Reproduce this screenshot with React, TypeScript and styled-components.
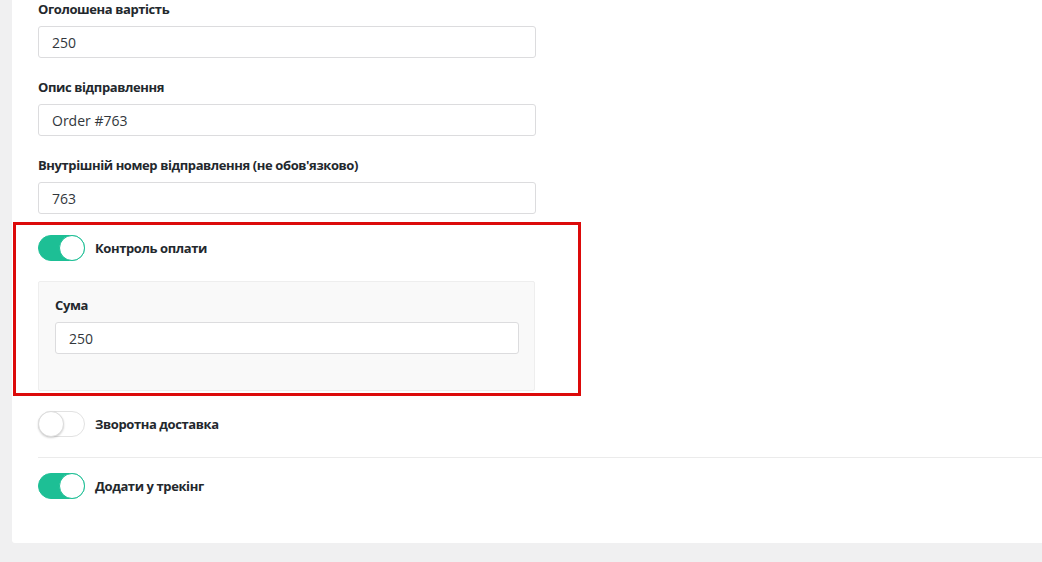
import styled, { createGlobalStyle } from "styled-components";

const GlobalStyle = createGlobalStyle`
  html, body {
    margin: 0;
    padding: 0;
    background: #f0f0f1;
    font-family: "Open Sans", "Noto Sans", sans-serif;
    overflow: hidden;
  }
`;

const Page = styled.div`
  width: 1042px;
  height: 562px;
  overflow: hidden;
`;

const Card = styled.div`
  margin-left: 12px;
  background: #fff;
  padding: 0 0 44px 26px;
  border-bottom-left-radius: 3px;
`;

const Field = styled.div<{ $last?: boolean }>`
  width: 498px;
  margin-bottom: ${(p) => (p.$last ? 0 : 20)}px;
`;

const Label = styled.div`
  font-size: 13px;
  font-weight: 700;
  line-height: 18px;
  letter-spacing: -0.4px;
  color: #23282d;
  margin-bottom: 8px;
`;

const Input = styled.input`
  box-sizing: border-box;
  display: block;
  width: 100%;
  height: 32px;
  padding: 0 13px;
  border: 1px solid #dcdcde;
  border-radius: 3px;
  background: #fff;
  font-family: inherit;
  font-size: 14px;
  color: #32373c;
  outline: none;
`;

const Marked = styled.div`
  position: relative;
  width: 498px;
  margin-top: 21px;

  &::after {
    content: "";
    position: absolute;
    left: -25px;
    top: -13px;
    right: -45px;
    bottom: -5px;
    border: 3px solid #dc0a0a;
    pointer-events: none;
  }
`;

const ToggleRow = styled.label<{ $gap?: number }>`
  display: flex;
  align-items: center;
  gap: 10px;
  height: 26px;
  margin-top: ${(p) => p.$gap ?? 0}px;
  font-size: 13px;
  font-weight: 700;
  letter-spacing: -0.4px;
  color: #23282d;
`;

const Track = styled.span<{ $on: boolean }>`
  position: relative;
  box-sizing: border-box;
  width: 47px;
  height: 26px;
  border-radius: 13px;
  background: ${(p) => (p.$on ? "#1dbf95" : "#fff")};
  border: 1px solid ${(p) => (p.$on ? "#1dbf95" : "#e2e2e2")};
  flex-shrink: 0;
`;

const Knob = styled.span<{ $on: boolean }>`
  position: absolute;
  top: -1px;
  ${(p) => (p.$on ? "right: -1px;" : "left: -1px;")}
  box-sizing: border-box;
  width: 26px;
  height: 26px;
  border-radius: 50%;
  background: #fff;
  border: 1px solid ${(p) => (p.$on ? "#1dbf95" : "#dcdcdc")};
  box-shadow: ${(p) => (p.$on ? "none" : "0 1px 2px rgba(0,0,0,0.18)")};
`;

const SubPanel = styled.div`
  margin-top: 20px;
  box-sizing: border-box;
  width: 497px;
  height: 110px;
  padding: 14px 15px 0 16px;
  background: #f9f9f9;
  border: 1px solid #eeeeee;
  border-radius: 2px;
`;

const Divider = styled.hr`
  margin: 20px 0 15px 0;
  border: 0;
  border-top: 1px solid #ebebeb;
  height: 0;
`;

const Toggle = ({ on, label, gap }: { on: boolean; label: string; gap?: number }) => (
  <ToggleRow $gap={gap}>
    <Track $on={on}>
      <Knob $on={on} />
    </Track>
    {label}
  </ToggleRow>
);

const fields = [
  { label: "Оголошена вартість", value: "250" },
  { label: "Опис відправлення", value: "Order #763" },
  { label: "Внутрішній номер відправлення (не обов'язково)", value: "763" },
];

export default function App() {
  return (
    <Page>
      <GlobalStyle />
      <Card>
        {fields.map((f, i) => (
          <Field key={f.label} $last={i === fields.length - 1}>
            <Label>{f.label}</Label>
            <Input defaultValue={f.value} />
          </Field>
        ))}

        <Marked>
          <Toggle on label="Контроль оплати" />
          <SubPanel>
            <Label>Сума</Label>
            <Input defaultValue="250" />
          </SubPanel>
        </Marked>

        <Toggle on={false} label="Зворотна доставка" gap={20} />
        <Divider />
        <Toggle on label="Додати у трекінг" />
      </Card>
    </Page>
  );
}
